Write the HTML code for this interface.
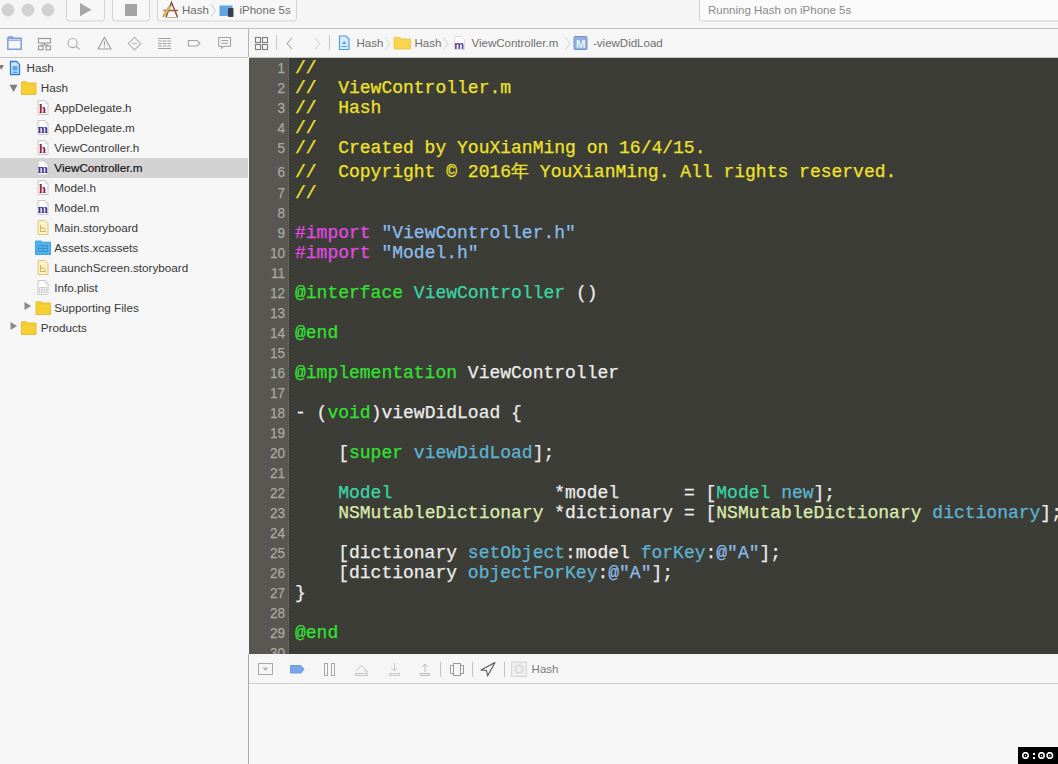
<!DOCTYPE html>
<html><head><meta charset="utf-8">
<style>
*{margin:0;padding:0;box-sizing:border-box}
html,body{width:1058px;height:764px;overflow:hidden;background:#f4f4f4;font-family:"Liberation Sans",sans-serif;position:relative}
.a{position:absolute}
#toolbar{left:0;top:0;width:1058px;height:28px;background:#f5f5f5}
#tbline{left:0;top:28px;width:1058px;height:1px;background:#c2c2c2}
#navtabs{left:0;top:29px;width:248px;height:28px;background:#f6f6f6}
#jump{left:249px;top:29px;width:809px;height:28px;background:#f6f6f6}
#hline1{left:0;top:57px;width:1058px;height:1px;background:#c4c4c4}
#vdiv{left:248px;top:29px;width:1px;height:735px;background:linear-gradient(#b4b4b4 0 28px,#f7f7f7 28px 625px,#a9a9a9 625px)}
#side{left:0;top:58px;width:248px;height:706px;background:#f6f6f6}
#editor{left:249px;top:58px;width:809px;height:596px;background:#3d3d37}
#gutter{left:249px;top:58px;width:40px;height:596px;background:#585751}
#gsep{left:288px;top:58px;width:1px;height:596px;background:repeating-linear-gradient(#74736d 0 1px,#5a5953 1px 3px)}
#debug{left:249px;top:654px;width:809px;height:30px;background:#f6f6f6}
#dline{left:249px;top:683px;width:809px;height:1px;background:#cfcfcf}
#console{left:249px;top:684px;width:809px;height:80px;background:#f7f7f7}
#timer{left:1018px;top:747px;width:40px;height:17px;background:#000;color:#fff;font:bold 12px "Liberation Mono",monospace;line-height:17px;text-align:center;letter-spacing:1px}
.code{left:295px;top:0;font-family:"Liberation Mono",monospace;font-size:18px;line-height:20px;white-space:pre;color:#ececec;-webkit-text-stroke:0.25px currentColor}
.ln{left:249px;top:0;width:36px;text-align:right;font-family:"Liberation Sans",sans-serif;font-size:15px;font-weight:normal;-webkit-text-stroke:0.25px #a9a9a4;line-height:20px;color:#a9a9a4;transform:scaleX(0.9);transform-origin:35px 0}
.c{color:#f0e22a}
.k{color:#e24ae6}
.s{color:#8cbcee}
.g{color:#32e232}
.t{color:#3ad6a6}
.f{color:#5eb4d4}
.y{color:#dcecae}
.tall{height:25px;padding-top:4px}
.side-row{height:20px;font-size:11px;line-height:20px;color:#2b2b2b;white-space:nowrap}
</style></head><body>
<div id="toolbar" class="a"></div>
<div id="tbline" class="a"></div>
<div id="navtabs" class="a"></div>
<div id="jump" class="a"></div>
<div id="hline1" class="a"></div>
<div id="side" class="a"></div>
<div id="vdiv" class="a"></div>
<div id="editor" class="a"></div>
<div id="gutter" class="a"></div>
<div id="gsep" class="a"></div>
<div id="debug" class="a"></div>
<div id="dline" class="a"></div>
<div id="console" class="a"></div>

<div class="a" style="left:0;top:58px;width:1058px;height:596px;overflow:hidden"><div class="a ln"><div>1</div><div>2</div><div>3</div><div>4</div><div>5</div><div class="tall">6</div><div>7</div><div>8</div><div>9</div><div>10</div><div>11</div><div>12</div><div>13</div><div>14</div><div>15</div><div>16</div><div>17</div><div>18</div><div>19</div><div>20</div><div>21</div><div>22</div><div>23</div><div>24</div><div>25</div><div>26</div><div>27</div><div>28</div><div>29</div><div>30</div></div>

<div class="a code"><div class="c">//</div><div class="c">//  ViewController.m</div><div class="c">//  Hash</div><div class="c">//</div><div class="c">//  Created by YouXianMing on 16/4/15.</div><div class="c tall">//  Copyright © 2016年 YouXianMing. All rights reserved.</div><div class="c">//</div><div> </div><div><span class="k">#import</span> <span class="s">"ViewController.h"</span></div><div><span class="k">#import</span> <span class="s">"Model.h"</span></div><div> </div><div><span class="g">@interface</span> <span class="t">ViewController</span> ()</div><div> </div><div><span class="g">@end</span></div><div> </div><div><span class="g">@implementation</span> ViewController</div><div> </div><div>- (<span class="g">void</span>)viewDidLoad {</div><div> </div><div>    [<span class="g">super</span> <span class="f">viewDidLoad</span>];</div><div> </div><div>    <span class="t">Model</span>               *model      = [<span class="t">Model</span> <span class="f">new</span>];</div><div>    <span class="y">NSMutableDictionary</span> *dictionary = [<span class="y">NSMutableDictionary</span> <span class="f">dictionary</span>];</div><div> </div><div>    [dictionary <span class="f">setObject</span>:model <span class="f">forKey</span>:<span class="s">@"A"</span>];</div><div>    [dictionary <span class="f">objectForKey</span>:<span class="s">@"A"</span>];</div><div>}</div><div> </div><div><span class="g">@end</span></div><div> </div></div></div>

<!-- SIDEBAR -->
<div class="a" style="left:0;top:158px;width:248px;height:20px;background:#d3d3d3"></div>
<svg class="a" style="left:0;top:58px" width="248" height="290">
  <defs>
    <g id="doc"><path d="M0.5 0.5 H7.5 L10.5 3.5 V14.5 H0.5 Z" fill="#fdfdfd" stroke="#c9c9c9" stroke-width="1"/><path d="M7.5 0.5 V3.5 H10.5" fill="none" stroke="#d5d5d5" stroke-width="0.8"/></g>
    <g id="hdoc"><use href="#doc"/><text x="1.6" y="12.8" font-family="Liberation Serif" font-weight="bold" font-size="12.5" fill="#951a3c">h</text></g>
    <g id="mdoc"><use href="#doc"/><text x="0.3" y="12.8" font-family="Liberation Serif" font-weight="bold" font-size="12" fill="#3d2a8c">m</text></g>
    <g id="folder"><path d="M0.5 2.5 V0.8 H5.5 L6.5 2 H15 V13.5 H0.5 Z" fill="#f6cf33" stroke="#e5bb2a" stroke-width="0.9"/><path d="M0.6 3 H15" stroke="#eec536" stroke-width="0.8"/></g>
    <g id="sb"><path d="M0.5 0.5 H7.5 L10.5 3.5 V14.5 H0.5 Z" fill="#fbf1c4" stroke="#d9c584" stroke-width="1"/><path d="M3 5 V11.5 H8.5 M3 8 H6.5 L8 10" fill="none" stroke="#c9a94c" stroke-width="0.9"/></g>
  </defs>
  <!-- row 0: project -->
  <path d="M-1.5 7 H4 L1.2 12 Z" fill="#7d7d7d"/>
  <path d="M10.5 3.5 H16.5 L19.5 6.5 V16.5 H10.5 Z" fill="#cfe6fb" stroke="#2f7fd0" stroke-width="1.3"/>
  <path d="M12.5 8 H17.5 V12.5 H12.5 Z" fill="#5aa8ea"/>
  <path d="M12.5 14.2 H17.5" stroke="#2f7fd0" stroke-width="1"/>
  <text x="26.5" y="14" font-family="Liberation Sans" font-size="11.7" fill="#383838">Hash</text>
  <!-- row 1: Hash folder -->
  <path d="M9.5 26.8 H17.6 L13.55 34 Z" fill="#7d7d7d"/>
  <use href="#folder" x="21" y="23"/>
  <text x="40.8" y="34" font-family="Liberation Sans" font-size="11.7" fill="#383838">Hash</text>
  <use href="#hdoc" x="37.5" y="42"/>
  <text x="54.3" y="54" font-family="Liberation Sans" font-size="11.7" fill="#383838">AppDelegate.h</text>
  <use href="#mdoc" x="37.5" y="62"/>
  <text x="54.3" y="74" font-family="Liberation Sans" font-size="11.7" fill="#383838">AppDelegate.m</text>
  <use href="#hdoc" x="37.5" y="82"/>
  <text x="54.3" y="94" font-family="Liberation Sans" font-size="11.7" fill="#383838">ViewController.h</text>
  <use href="#mdoc" x="37.5" y="102.5"/>
  <text x="54.3" y="114" font-family="Liberation Sans" font-size="11.7" fill="#141414" stroke="#141414" stroke-width="0.2">ViewController.m</text>
  <use href="#hdoc" x="37.5" y="122"/>
  <text x="54.3" y="134" font-family="Liberation Sans" font-size="11.7" fill="#383838">Model.h</text>
  <use href="#mdoc" x="37.5" y="142"/>
  <text x="54.3" y="154" font-family="Liberation Sans" font-size="11.7" fill="#383838">Model.m</text>
  <use href="#sb" x="37.5" y="162"/>
  <text x="54.3" y="174" font-family="Liberation Sans" font-size="11.7" fill="#383838">Main.storyboard</text>
  <!-- assets -->
  <path d="M35.5 184.2 V183 H41 L42 184.2 H50.5 V196.5 H35.5 Z" fill="#52b2ea" stroke="#3a98d6" stroke-width="0.9"/>
  <path d="M38.5 187.5 H47.5 V193.5 H38.5 Z M38.5 190.5 H47.5 M43 187.5 V193.5" fill="none" stroke="#2f87c8" stroke-width="0.7"/>
  <text x="54.3" y="194" font-family="Liberation Sans" font-size="11.7" fill="#383838">Assets.xcassets</text>
  <use href="#sb" x="37.5" y="202"/>
  <text x="54.3" y="214" font-family="Liberation Sans" font-size="11.7" fill="#383838">LaunchScreen.storyboard</text>
  <use href="#doc" x="37.5" y="222"/>
  <path d="M39.5 229.5 H46.5 V234.5 H39.5 Z M39.5 232 H46.5 M41.8 229.5 V234.5 M44.2 229.5 V234.5" fill="none" stroke="#bdbdbd" stroke-width="0.7"/>
  <text x="54.3" y="234" font-family="Liberation Sans" font-size="11.7" fill="#383838">Info.plist</text>
  <!-- supporting files -->
  <path d="M24.5 244 L31 248 L24.5 252 Z" fill="#8a8a8a"/>
  <use href="#folder" x="35.5" y="243"/>
  <text x="54.3" y="254" font-family="Liberation Sans" font-size="11.7" fill="#383838">Supporting Files</text>
  <!-- products -->
  <path d="M10.5 264 L17 268 L10.5 272 Z" fill="#8a8a8a"/>
  <use href="#folder" x="21" y="263"/>
  <text x="40.8" y="274" font-family="Liberation Sans" font-size="11.7" fill="#383838">Products</text>
</svg>

<!-- TOOLBAR -->
<svg class="a" style="left:0;top:0" width="1058" height="28">
  <circle cx="8" cy="10" r="6" fill="#d2d2d2" stroke="#c6c6c6" stroke-width="0.6"/>
  <circle cx="28" cy="10" r="6" fill="#d2d2d2" stroke="#c6c6c6" stroke-width="0.6"/>
  <circle cx="48" cy="10" r="6" fill="#d2d2d2" stroke="#c6c6c6" stroke-width="0.6"/>
  <rect x="66.5" y="-5" width="38" height="26" rx="3" fill="#f7f7f7" stroke="#d3d3d3" stroke-width="1"/>
  <path d="M80 3 L91.5 9.7 L80 16.3 Z" fill="#a6a6a6"/>
  <rect x="112.5" y="-5" width="37" height="26" rx="3" fill="#f7f7f7" stroke="#d3d3d3" stroke-width="1"/>
  <rect x="125" y="4" width="12" height="12" fill="#a3a3a3"/>
  <rect x="157.5" y="-5" width="139" height="26" rx="3" fill="#f7f7f7" stroke="#d3d3d3" stroke-width="1"/>
  <!-- app icon (A) -->
  <path d="M166 17 L171.5 2.5 L177.5 17" fill="none" stroke="#8a5236" stroke-width="1.5"/>
  <path d="M163.5 10.5 L178 10.5" stroke="#9c6444" stroke-width="1.6"/>
  <path d="M163 17 L170 6" stroke="#d9b06a" stroke-width="2.6"/>
  <path d="M166 17.5 L178 17.5" stroke="#b5a58c" stroke-width="0.9"/>
  <text x="182" y="14" font-family="Liberation Sans" font-size="11.5" fill="#6d6d6d">Hash</text>
  <path d="M211 4.5 L215.5 10.5 L211 16.5" fill="none" stroke="#c9c9c9" stroke-width="1"/>
  <!-- device icon -->
  <rect x="219.5" y="5.5" width="13" height="10.5" fill="#5fa6e0"/>
  <rect x="228" y="8" width="5.5" height="9" rx="1" fill="#3a4048"/>
  <text x="239.5" y="14" font-family="Liberation Sans" font-size="11.5" fill="#6d6d6d">iPhone 5s</text>
  <rect x="699.5" y="-5" width="400" height="26" rx="3" fill="#fafafa" stroke="#d2d2d2" stroke-width="1"/>
  <text x="708" y="14" font-family="Liberation Sans" font-size="11.5" fill="#8a8a8a">Running Hash on iPhone 5s</text>
</svg>
<!-- NAV TABS -->
<svg class="a" style="left:0;top:29px" width="248" height="28">
  <g fill="none">
    <path d="M7.8 9.2 H21.2 V20.2 H7.8 Z" stroke="#7d9edc" stroke-width="1.5"/>
    <path d="M7.8 8 H12.5 L13.5 9" stroke="#7d9edc" stroke-width="1.4"/>
    <path d="M7.8 11.2 H21.2" stroke="#8aa8e0" stroke-width="1.3"/>
    <g stroke="#949494" stroke-width="1.1">
      <rect x="38.5" y="9.5" width="12" height="4.5"/>
      <path d="M44.5 14 V16 M40.7 16 H48.3"/>
      <rect x="38.5" y="17" width="4.5" height="3.8"/>
      <rect x="46" y="17" width="4.5" height="3.8"/>
    </g>
    <g stroke="#a6a6a6" stroke-width="1.05">
      <circle cx="72.6" cy="14" r="4.6"/>
      <path d="M76 17.4 L79.8 20.6"/>
    </g>
    <g stroke="#9e9e9e" stroke-width="1.1">
      <path d="M104.5 8.3 L111 20 H98 Z" stroke-linejoin="round"/>
      <path d="M104.5 12.2 V16.4 M104.5 17.6 V18.6"/>
    </g>
    <g stroke="#b3b3b3" stroke-width="1.1">
      <path d="M134.5 8.3 L140.8 14.6 L134.5 20.9 L128.2 14.6 Z" stroke-linejoin="round"/>
      <path d="M132.3 14.6 H136.7"/>
    </g>
    <g stroke="#a0a0a0" stroke-width="1">
      <path d="M158 9.5 H171 M158 19.5 H171"/><path d="M158 12 H171 M158 14.5 H171 M158 17 H171" stroke-dasharray="3.7 1"/>
    </g>
    <g stroke="#a0a0a0" stroke-width="1.1">
      <path d="M188.5 11.5 H197 L200 14.2 L197 17 H188.5 Z"/>
    </g>
    <g stroke="#a0a0a0" stroke-width="1.1">
      <path d="M218.7 8.5 H230.5 V17.3 H223.5 L221.5 19.3 V17.3 H218.7 Z" stroke-linejoin="round"/>
      <path d="M221.3 11.5 H228 M221.3 14.2 H228"/>
    </g>
  </g>
</svg>
<!-- JUMP BAR -->
<svg class="a" style="left:249px;top:29px" width="809" height="28">
  <g fill="none" stroke="#7e7e7e" stroke-width="1.1">
    <rect x="6.5" y="8.5" width="5" height="5"/>
    <rect x="13.5" y="8.5" width="5" height="5"/>
    <rect x="6.5" y="15.5" width="5" height="5"/>
    <rect x="13.5" y="15.5" width="5" height="5"/>
  </g>
  <path d="M27.5 6 V21" stroke="#c8c8c8" stroke-width="1"/>
  <path d="M43 8.8 L38 14.5 L43 20" fill="none" stroke="#b8b8b8" stroke-width="1.2"/>
  <path d="M66 8.8 L71 14.5 L66 20" fill="none" stroke="#dcdcdc" stroke-width="1.2"/>
  <path d="M80.5 6 V21" stroke="#c8c8c8" stroke-width="1"/>
  <!-- project icon -->
  <path d="M90.5 7 H97 L100 10 V20.5 H90.5 Z" fill="#d9ecfb" stroke="#4d9ee0" stroke-width="1.2"/>
  <path d="M92.5 17.5 H98" stroke="#4d9ee0" stroke-width="1"/>
  <path d="M93 15 L95.2 12 L97.5 15 Z" fill="#4d9ee0"/>
  <text x="107.5" y="17.5" font-family="Liberation Sans" font-size="11.5" fill="#6f6f6f">Hash</text>
  <path d="M136 8 L141 14.5 L136 21" fill="none" stroke="#d6d6d6" stroke-width="1"/>
  <!-- folder -->
  <path d="M145 8.5 H151 L152.5 10 H161.5 V20 H145 Z" fill="#f8d44f" stroke="#eac23e" stroke-width="0.8"/>
  <text x="165.5" y="17.5" font-family="Liberation Sans" font-size="11.5" fill="#6f6f6f">Hash</text>
  <path d="M194 8 L199 14.5 L194 21" fill="none" stroke="#d6d6d6" stroke-width="1"/>
  <path d="M205.5 7.5 H212.5 L215.5 10.5 V20.5 H205.5 Z" fill="#fdfdfd" stroke="#dcdcdc" stroke-width="1"/><text x="205.2" y="19.6" font-family="Liberation Sans" font-size="11" font-weight="bold" fill="#5b3a9a">m</text>
  <text x="222.5" y="17.5" font-family="Liberation Sans" font-size="11.5" fill="#6f6f6f">ViewController.m</text>
  <path d="M316 8 L321 14.5 L316 21" fill="none" stroke="#d6d6d6" stroke-width="1"/>
  <rect x="325" y="7.5" width="13" height="13" rx="1" fill="#8fb0e0" stroke="#7193cc" stroke-width="1"/>
  <text x="327" y="18.6" font-family="Liberation Sans" font-size="11.5" font-weight="bold" fill="#eef3fb">M</text>
  <text x="344" y="17.5" font-family="Liberation Sans" font-size="11.5" fill="#6f6f6f">-viewDidLoad</text>
</svg>

<!-- DEBUG BAR -->
<svg class="a" style="left:249px;top:654px" width="809" height="30">
  <g fill="none" stroke-width="1">
    <rect x="9.5" y="9.5" width="14" height="11" stroke="#a9a9a9"/>
    <path d="M13.5 13.5 H19.5 L16.5 17 Z" fill="#b5b5b5" stroke="none"/>
    <path d="M41.5 11.5 H52 L55 15.2 L52 19 H41.5 Z" fill="#78a6ea" stroke="#6d9de6"/>
    <rect x="75.5" y="9.5" width="3" height="12" stroke="#a8a8a8"/>
    <rect x="82.5" y="9.5" width="3" height="12" stroke="#a8a8a8"/>
    <g stroke="#c2c2c2">
      <path d="M107 17 L112.5 11.5 L118 17"/>
      <path d="M115.5 16.5 L118.5 17.5 L116.5 19.5"/>
      <path d="M106.5 19.5 H118.5 V21.5 H106.5 Z"/>
    </g>
    <g stroke="#c6c6c6">
      <path d="M145.5 9 V17 M142.5 14 L145.5 17 L148.5 14"/>
      <path d="M140.5 19.5 H150.5 V21.5 H140.5 Z"/>
    </g>
    <g stroke="#bdbdbd">
      <path d="M176 10 V18 M173 13 L176 10 L179 13"/>
      <path d="M171.5 19.5 H180.5 V21.5 H171.5 Z"/>
    </g>
    <path d="M191.5 8 V23" stroke="#c3c3c3"/>
    <g stroke="#9a9a9a">
      <rect x="204.5" y="9.5" width="7" height="12"/>
      <path d="M201.5 11.5 V19.5 H204.5 M214.5 11.5 V19.5 H211.5 M201.5 11.5 H204.5 M211.5 11.5 H214.5"/>
    </g>
    <path d="M223.5 8 V23" stroke="#c3c3c3"/>
    <path d="M232 16 L246 8.5 L238.5 22 L237.5 16.5 Z" stroke="#555" stroke-linejoin="round" stroke-width="1.1"/>
    <path d="M255.5 8 V23" stroke="#c3c3c3"/>
    <rect x="262.5" y="8" width="15" height="14.5" fill="#ededed" stroke="#d6d6d6"/>
    <circle cx="270" cy="15.2" r="3.8" stroke="#cfcfcf"/>
  </g>
  <text x="282.6" y="18.5" font-family="Liberation Sans" font-size="11.5" fill="#7b7b7b">Hash</text>
</svg>

<div id="timer" class="a"></div>
<svg class="a" style="left:1018px;top:748px" width="40" height="16"><g fill="none" stroke="#fff" stroke-width="1.6"><path d="M6.3 4.9 H8.7 L10.1 6.3 V8.7 L8.7 10.1 H6.3 L4.9 8.7 V6.3 Z"/><path d="M22.3 4.9 H24.7 L26.1 6.3 V8.7 L24.7 10.1 H22.3 L20.9 8.7 V6.3 Z"/><path d="M30.6 4.9 H33.0 L34.4 6.3 V8.7 L33.0 10.1 H30.6 L29.2 8.7 V6.3 Z"/></g><g fill="#fff"><rect x="15" y="5" width="2" height="2"/><rect x="15" y="9" width="2" height="2"/><rect x="7" y="7" width="1" height="1.2"/><rect x="23" y="7" width="1" height="1.2"/><rect x="31.3" y="7" width="1" height="1.2"/></g></svg>
</body></html>
